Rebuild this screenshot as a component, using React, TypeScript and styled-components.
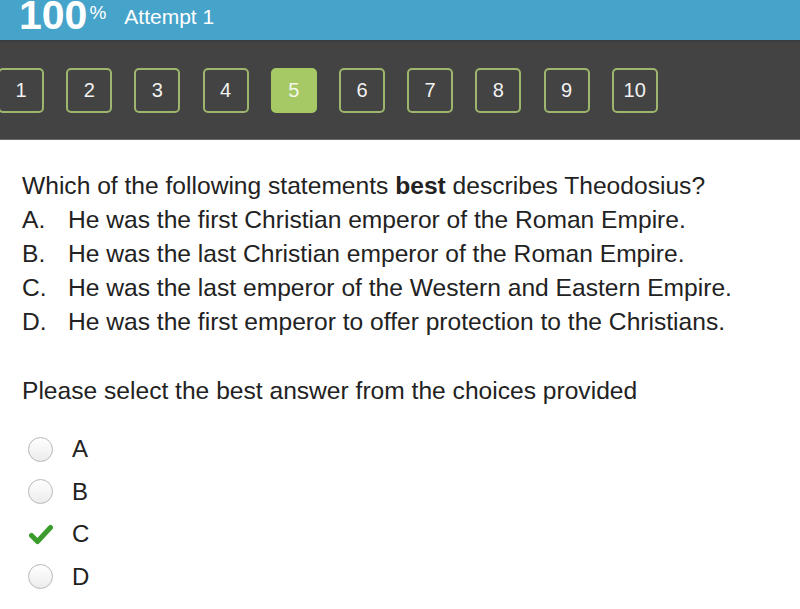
import React from "react";
import styled, { createGlobalStyle } from "styled-components";

const GlobalStyle = createGlobalStyle`
  html, body {
    margin: 0;
    padding: 0;
    background: #fff;
    font-family: "Liberation Sans", Arial, Helvetica, sans-serif;
    overflow: hidden;
  }
`;

const Page = styled.div`
  width: 800px;
  height: 609px;
  overflow: hidden;
  background: #fff;
`;

const ScoreBar = styled.div`
  height: 40px;
  background: #46a3c9;
  border-bottom: 2px solid #3a3d3f;
  display: flex;
  align-items: flex-end;
  padding-left: 19px;
  overflow: hidden;
  color: #fff;
`;

const Score = styled.div`
  font-size: 41px;
  font-weight: bold;
  line-height: 1;
  margin-bottom: 4px;
  display: flex;
  align-items: flex-start;
`;

const Percent = styled.span`
  font-size: 19px;
  font-weight: normal;
  margin-left: 2px;
  margin-top: 8px;
`;

const Attempt = styled.div`
  font-size: 21px;
  margin-left: 18px;
  margin-bottom: 13px;
  line-height: 1;
`;

const Nav = styled.div`
  height: 98px;
  background: #434343;
  border-bottom: 1px solid #6b6b6b;
  display: flex;
  align-items: flex-start;
  gap: 22.2px;
  padding-top: 26px;
  box-sizing: border-box;
  margin-left: -2px;
`;

const PageBox = styled.div<{ $active?: boolean }>`
  width: 46px;
  height: 45px;
  box-sizing: border-box;
  border: 2px solid ${(p) => (p.$active ? "#a6c965" : "#9db56c")};
  background: ${(p) => (p.$active ? "#a6c965" : "transparent")};
  border-radius: 5px;
  display: flex;
  align-items: center;
  justify-content: center;
  color: ${(p) => (p.$active ? "#f4f8ea" : "#f2f2f2")};
  font-size: 20px;
`;

const Content = styled.div`
  padding: 29px 22px 0;
  color: #222;
  font-size: 24.6px;
  line-height: 34px;
`;

const Question = styled.div``;

const Choice = styled.div`
  display: flex;
`;

const ChoiceLetter = styled.span`
  width: 46px;
  flex-shrink: 0;
`;

const Prompt = styled.div`
  margin-top: 35px;
`;

const Options = styled.div`
  margin-top: 20px;
  display: flex;
  flex-direction: column;
`;

const Option = styled.div`
  height: 42.5px;
  display: flex;
  align-items: center;
  margin-left: 6px;
`;

const Radio = styled.span`
  width: 25px;
  height: 25px;
  box-sizing: border-box;
  border-radius: 50%;
  border: 1.5px solid #b9b9b9;
  background: linear-gradient(#ffffff, #ececec);
  flex-shrink: 0;
`;

const CheckSlot = styled.span`
  width: 25px;
  height: 25px;
  display: flex;
  align-items: center;
  justify-content: center;
  flex-shrink: 0;
`;

const OptionLabel = styled.span`
  margin-left: 19px;
  font-size: 24px;
`;

const pages = [1, 2, 3, 4, 5, 6, 7, 8, 9, 10];

const choices = [
  ["A.", "He was the first Christian emperor of the Roman Empire."],
  ["B.", "He was the last Christian emperor of the Roman Empire."],
  ["C.", "He was the last emperor of the Western and Eastern Empire."],
  ["D.", "He was the first emperor to offer protection to the Christians."],
];

const Check = () => (
  <svg width="24" height="22" viewBox="0 0 24 22">
    <path
      d="M2.5 12.5 L8.5 18.5 L21.5 4.5"
      fill="none"
      stroke="#3b9b2c"
      strokeWidth="5"
      strokeLinecap="round"
      strokeLinejoin="round"
    />
  </svg>
);

export default function App() {
  return (
    <Page>
      <GlobalStyle />
      <ScoreBar>
        <Score>
          100<Percent>%</Percent>
        </Score>
        <Attempt>Attempt 1</Attempt>
      </ScoreBar>
      <Nav>
        {pages.map((n) => (
          <PageBox key={n} $active={n === 5}>
            {n}
          </PageBox>
        ))}
      </Nav>
      <Content>
        <Question>
          Which of the following statements <b>best</b> describes Theodosius?
        </Question>
        {choices.map(([l, t]) => (
          <Choice key={l}>
            <ChoiceLetter>{l}</ChoiceLetter>
            {t}
          </Choice>
        ))}
        <Prompt>Please select the best answer from the choices provided</Prompt>
        <Options>
          {["A", "B", "C", "D"].map((o) => (
            <Option key={o}>
              {o === "C" ? (
                <CheckSlot>
                  <Check />
                </CheckSlot>
              ) : (
                <Radio />
              )}
              <OptionLabel>{o}</OptionLabel>
            </Option>
          ))}
        </Options>
      </Content>
    </Page>
  );
}
